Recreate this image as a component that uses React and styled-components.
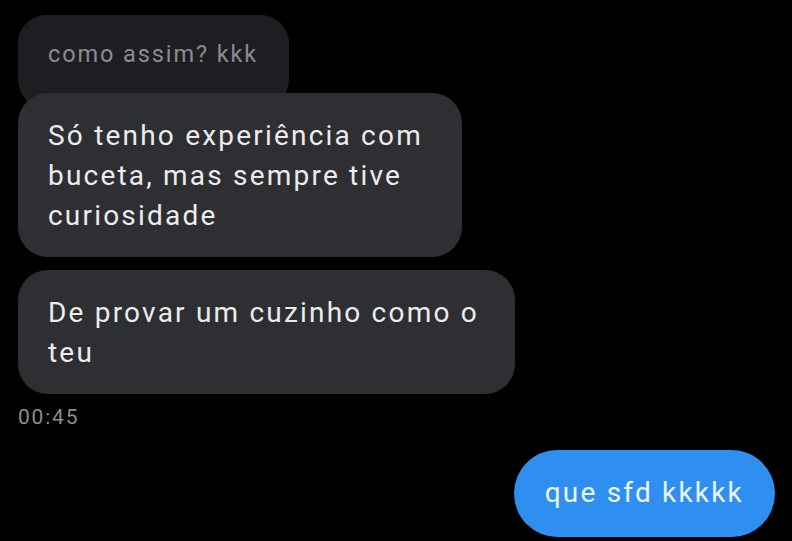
import React from 'react';
import styled, { createGlobalStyle } from 'styled-components';

const GlobalStyle = createGlobalStyle`
  html, body {
    margin: 0;
    background: #000;
  }
  body {
    font-family: Roboto, "Noto Sans", "Liberation Sans", sans-serif;
    -webkit-font-smoothing: antialiased;
  }
`;

const Thread = styled.div`
  width: 792px;
  height: 541px;
  box-sizing: border-box;
  padding: 15px 17px 0 18px;
  display: flex;
  flex-direction: column;
  align-items: flex-start;
  overflow: hidden;
`;

// quoted message the reply sits on top of
const Quote = styled.div`
  box-sizing: border-box;
  padding: 24px 31px 39px 30px;
  margin-bottom: -15px;
  border-radius: 28px;
  background: #1d1e21;
  color: #8c8c8e;
  font-size: 23.5px;
  line-height: 30px;
  letter-spacing: 1.9px;
`;

const Bubble = styled.div`
  box-sizing: border-box;
  max-width: ${p => p.$max || 500}px;
  padding: 23px 34px 21px 30px;
  margin-bottom: 13px;
  border-radius: 30px;
  background: #2e2f33;
  color: #ececec;
  font-size: 28px;
  line-height: 40px;
  letter-spacing: 2.2px;
`;

const Stamp = styled.div`
  margin-top: -3px;
  color: #8e8e90;
  font-size: 21px;
  line-height: 26px;
  letter-spacing: 1.8px;
`;

const Sent = styled.div`
  align-self: flex-end;
  margin-top: 20px;
  padding: 23px 31px 24px 31px;
  border-radius: 44px;
  background: #2f8ff0;
  color: #eaf6ff;
  font-size: 28px;
  line-height: 40px;
  letter-spacing: 2.2px;
`;

export default function App() {
  return (
    <>
      <GlobalStyle />
      <Thread>
        <Quote>como assim? kkk</Quote>
        <Bubble $max={444}>Só tenho experiência com buceta, mas sempre tive curiosidade</Bubble>
        <Bubble $max={497}>De provar um cuzinho como o teu</Bubble>
        <Stamp>00:45</Stamp>
        <Sent>que sfd kkkkk</Sent>
      </Thread>
    </>
  );
}
